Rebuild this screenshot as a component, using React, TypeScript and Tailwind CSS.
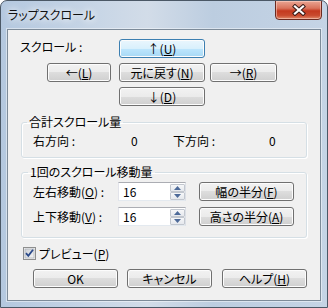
import React from "react";

const F = "font-['Noto_Sans_CJK_JP','Noto_Sans',sans-serif] [font-feature-settings:'palt']";

function U({ children }: { children: React.ReactNode }) {
  return <span className="underline underline-offset-[1px] decoration-[1px]">{children}</span>;
}

function Btn({ w, focus, children }: { w: string; focus?: boolean; children: React.ReactNode }) {
  return (
    <div
      className={`${w} h-[19px] shrink-0 rounded-[3px] border ${
        focus
          ? "border-[#3c7fb1] bg-[linear-gradient(#eaf6fd_0%,#d9f0fc_50%,#bee6fd_50%,#a7d9f5_100%)]"
          : "border-[#707070] bg-[linear-gradient(#f2f2f2_0%,#ebebeb_50%,#dddddd_50%,#cfcfcf_100%)]"
      } shadow-[inset_0_0_0_1px_#fcfcfc] flex items-center justify-center text-[12px] leading-[12px] text-black`}
    >
      {children}
    </div>
  );
}

function SpinBtn({ up }: { up?: boolean }) {
  return (
    <div className="h-[8px] w-[15px] border border-[#c2c7cf] rounded-[1px] bg-[linear-gradient(#f6f7f9,#e5e8ed)] flex items-center justify-center">
      <svg width="7" height="4" viewBox="0 0 7 4">
        {up ? <path d="M0 4 L3.5 0 L7 4 Z" fill="#4d6a99" /> : <path d="M0 0 L3.5 4 L7 0 Z" fill="#4d6a99" />}
      </svg>
    </div>
  );
}

function Spin({ value }: { value: string }) {
  return (
    <div className="w-[68px] h-[19px] shrink-0 border border-[#abadb3] border-b-[#e3e9ef] border-r-[#dbdfe6] border-l-[#e2e3ea] bg-white flex">
      <div className="flex-1 pl-[4px] text-[12px] leading-[17px]">{value}</div>
      <div className="w-[15px] flex flex-col justify-center gap-[0px]">
        <SpinBtn up />
        <SpinBtn />
      </div>
    </div>
  );
}

export default function App() {
  return (
    <div className={`${F} w-[328px] h-[308px] relative rounded-t-[7px] border border-[#4b5866] bg-[linear-gradient(90deg,#b4c8df_0%,#c8d6e6_30%,#d2dce8_45%,#bccde0_65%,#c5d4e5_100%)] flex flex-col overflow-hidden text-black`}>
      {/* Title bar */}
      <div className="h-[28px] shrink-0 pl-[7px] pt-[7px] font-['Noto_Sans_CJK_JP',sans-serif] text-[12px] leading-[14px] text-[#111] [text-shadow:0_0_6px_#fff,0_0_10px_#fff]">
        ラップスクロール
      </div>
      {/* Close button */}
      <div className="absolute top-[-1px] right-[5px] w-[47px] h-[20px] rounded-b-[4px] border border-[#6b2a20] bg-[linear-gradient(#e9a593_0%,#d9735c_40%,#c4391f_55%,#c94a2e_80%,#e08a6a_100%)] shadow-[inset_0_0_0_1px_rgba(255,220,210,0.5)] flex items-center justify-center">
        <svg width="16" height="12" viewBox="0 0 16 12">
          <path d="M4 2.5 L12 9.5 M12 2.5 L4 9.5" stroke="#3b1c18" strokeWidth="4.2" strokeLinecap="square" />
          <path d="M4 2.5 L12 9.5 M12 2.5 L4 9.5" stroke="#ffffff" strokeWidth="2.2" strokeLinecap="square" />
        </svg>
      </div>

      {/* Client area */}
      <div className="mx-[6px] h-[272px] shrink-0 border border-[#7d8b99] bg-[#f0f0f0] shadow-[0_0_0_1px_rgba(255,255,255,0.45)]">
        <div className="pt-[9px] text-[12px] leading-[12px]">
          <div className="flex items-start">
            <div className="w-[111px] pl-[12px] pt-[2px]">スクロール :</div>
            <Btn w="w-[86px]" focus>
              ↑(<U>U</U>)
            </Btn>
          </div>
          <div className="flex mt-[5px] pl-[39px]">
            <Btn w="w-[64px]">
              ←(<U>L</U>)
            </Btn>
            <div className="ml-[8px]">
              <Btn w="w-[86px]">
                元に戻す(<U>N</U>)
              </Btn>
            </div>
            <div className="ml-[5px]">
              <Btn w="w-[67px]">
                →(<U>R</U>)
              </Btn>
            </div>
          </div>
          <div className="flex mt-[5px] pl-[111px]">
            <Btn w="w-[86px]">
              ↓(<U>D</U>)
            </Btn>
          </div>

          {/* Group 1 */}
          <fieldset className="mt-[10px] ml-[13px] w-[286px] border border-[#d5dfe5] rounded-[3px] shadow-[inset_1px_1px_0_#fff,1px_1px_0_#fff] pb-[10px]">
            <legend className="ml-[5px] px-[2px] leading-[12px]">合計スクロール量</legend>
            <div className="flex pl-[11px] pt-[7px]">
              <div className="w-[98px]">右方向 :</div>
              <div className="w-[42px]">0</div>
              <div className="w-[96px]">下方向 :</div>
              <div>0</div>
            </div>
          </fieldset>

          {/* Group 2 */}
          <fieldset className="mt-[8px] ml-[13px] w-[286px] border border-[#d5dfe5] rounded-[3px] shadow-[inset_1px_1px_0_#fff,1px_1px_0_#fff] pb-[11px]">
            <legend className="ml-[6px] px-[2px] leading-[12px]">1回のスクロール移動量</legend>
            <div className="flex items-center pl-[11px] pt-[4px]">
              <div className="w-[85px]">
                左右移動(<U>O</U>) :
              </div>
              <Spin value="16" />
              <div className="ml-[13px]">
                <Btn w="w-[95px]">
                  幅の半分(<U>F</U>)
                </Btn>
              </div>
            </div>
            <div className="flex items-center pl-[11px] mt-[6px]">
              <div className="w-[85px]">
                上下移動(<U>V</U>) :
              </div>
              <Spin value="16" />
              <div className="ml-[13px]">
                <Btn w="w-[95px]">
                  高さの半分(<U>A</U>)
                </Btn>
              </div>
            </div>
          </fieldset>

          {/* Preview checkbox */}
          <div className="flex items-center mt-[9px] pl-[15px]">
            <svg width="13" height="13" viewBox="0 0 13 13" className="shrink-0">
              <defs>
                <linearGradient id="cbg" x1="0" y1="0" x2="1" y2="1">
                  <stop offset="0" stopColor="#cbcfd5" />
                  <stop offset="1" stopColor="#f6f6f6" />
                </linearGradient>
              </defs>
              <rect x="0.5" y="0.5" width="12" height="12" fill="#f4f4f4" stroke="#8e8f8f" />
              <rect x="2" y="2" width="9" height="9" fill="url(#cbg)" stroke="#aeb3b9" strokeWidth="0.8" />
              <path d="M3 6.2 L5.3 8.8 L10 2.8" fill="none" stroke="#2b4a8a" strokeWidth="1.8" />
            </svg>
            <div className="ml-[3px]">
              プレビュー(<U>P</U>)
            </div>
          </div>

          {/* Bottom buttons */}
          <div className="flex mt-[9px] pl-[25px]">
            <Btn w="w-[85px]">OK</Btn>
            <div className="ml-[9px]">
              <Btn w="w-[85px]">キャンセル</Btn>
            </div>
            <div className="ml-[10px]">
              <Btn w="w-[85px]">
                ヘルプ(<U>H</U>)
              </Btn>
            </div>
          </div>
        </div>
      </div>
    </div>
  );
}
